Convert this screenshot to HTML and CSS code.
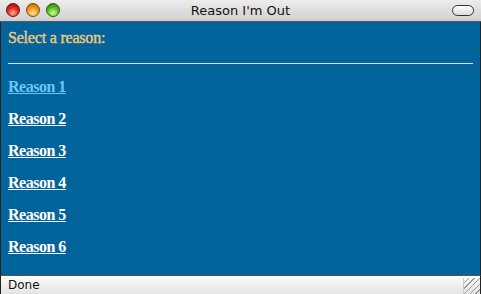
FILE: index.html
```html
<!DOCTYPE html>
<html>
<head>
<meta charset="utf-8">
<link rel="stylesheet" href="styles.css">
</head>
<body>
<div class="window">
  <div class="titlebar">
    <div class="lights">
      <span class="light red"></span>
      <span class="light yellow"></span>
      <span class="light green"></span>
    </div>
    <div class="title">Reason I'm Out</div>
    <span class="pill"></span>
  </div>
  <div class="content">
    <div class="heading">Select a reason:</div>
    <div class="rule"></div>
    <ul class="reasons">
      <li><a class="visited">Reason 1</a></li>
      <li><a>Reason 2</a></li>
      <li><a>Reason 3</a></li>
      <li><a>Reason 4</a></li>
      <li><a>Reason 5</a></li>
      <li><a>Reason 6</a></li>
    </ul>
  </div>
  <div class="statusbar">
    <span class="status">Done</span>
    <span class="grip"></span>
  </div>
</div>
</body>
</html>
```
FILE: styles.css
```css
html, body { margin: 0; padding: 0; }
body { width: 481px; height: 294px; overflow: hidden; background: #222; }
.window {
  width: 481px; height: 294px;
  display: flex; flex-direction: column;
  box-sizing: border-box;
}
.titlebar {
  height: 22px; flex: none;
  position: relative;
  display: flex; align-items: center; justify-content: center;
  background: linear-gradient(#ededed, #cfcfcf);
  border-bottom: 1px solid #555;
  box-sizing: border-box;
}
.lights { position: absolute; left: 6px; top: 3px; display: flex; gap: 6px; }
.light { width: 14px; height: 14px; border-radius: 50%; display: block; box-sizing: border-box; }
.red { background: radial-gradient(circle at 50% 75%, #ffb0a0, #e0281f 50%, #8a0e0a); border: 1px solid #6a1410; }
.yellow { background: radial-gradient(circle at 50% 75%, #ffe6a0, #f29a12 50%, #a05a00); border: 1px solid #7a5010; }
.green { background: radial-gradient(circle at 50% 75%, #d0ffa0, #5cbc22 50%, #2a6a08); border: 1px solid #2f5e10; }
.title { font-family: "DejaVu Sans", sans-serif; font-size: 13px; color: #111; }
.pill {
  position: absolute; right: 7px; top: 5px;
  width: 20px; height: 9px; border: 1.5px solid #333; border-radius: 6px;
  background: linear-gradient(#fff, #ddd);
}
.content {
  flex: 1;
  background: #03649b;
  border-left: 1px solid #222;
  border-right: 1px solid #222;
  padding: 0 7px;
  font-family: "Liberation Serif", serif;
}
.heading {
  margin-top: 6px;
  font-size: 16px; font-weight: normal;
  -webkit-text-stroke: 0.4px #f1c878;
  letter-spacing: -0.2px;
  color: #f1c878;
  line-height: 20px;
}
.rule {
  margin-top: 15px;
  height: 1px;
  background: #cfe4ef;
  border-bottom: 1px solid #1f5c80;
}
.reasons { list-style: none; margin: 13px 0 0 0; padding: 0; }
.reasons li { font-size: 16px; font-weight: bold; letter-spacing: -0.5px; line-height: 18px; margin-bottom: 14px; }
.reasons a { color: #fff; text-decoration: underline; }
.reasons a.visited { color: #6cc8f4; }
.statusbar {
  height: 19px; flex: none;
  display: flex; align-items: center; justify-content: space-between;
  background: linear-gradient(#fdfdfd, #e4e4e4);
  border-top: 1px solid #555;
  border-left: 1px solid #222;
  border-right: 1px solid #222;
  box-sizing: border-box;
  padding-left: 7px;
}
.status { font-family: "DejaVu Sans", sans-serif; font-size: 12px; color: #111; }
.grip {
  width: 16px; height: 16px; align-self: flex-end;
  background: repeating-linear-gradient(135deg, transparent 0 3px, #999 3px 4px);
  border-left: 1px solid #ccc;
}
```
